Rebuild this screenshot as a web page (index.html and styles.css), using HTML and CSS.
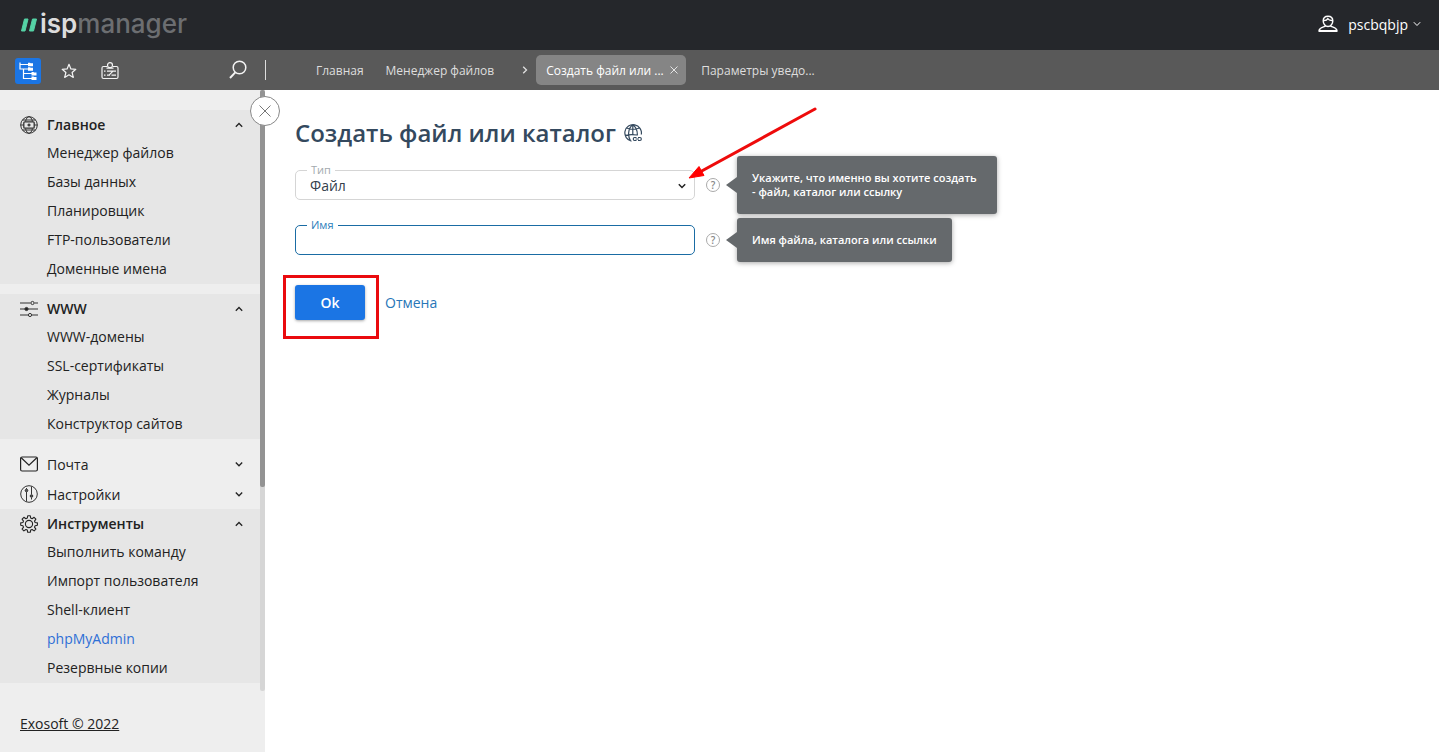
FILE: index.html
```html
<!DOCTYPE html>
<html lang="ru">
<head>
<meta charset="utf-8">
<title>ispmanager</title>
<link rel="stylesheet" href="styles.css">
</head>
<body>
<div class="app">
  <header class="header">
    <a class="logo" href="#">
      <svg class="logo-mark" width="18" height="14" viewBox="0 0 18 14"><path d="M4.500 1H8L5 13H1.500zM12.500 1H16.500L13.500 13H9.500z" fill="#55d2a5" stroke="#55d2a5" stroke-linejoin="round"/></svg>
      <span class="logo-text"><span class="logo-strong">isp</span>manager</span>
    </a>
    <button class="user" type="button">
      <svg width="20" height="18" viewBox="0 0 20 18" fill="none" stroke="#fff" stroke-width="1.400"><path d="M10 1.200c-3 0-4.800 1.800-4.800 4.800 0 2.600 2 5.500 4.800 5.500s4.800-2.900 4.800-5.500c0-3-1.800-4.800-4.800-4.800z"/><path d="M5.500 5.500c2 .3 3.500-.5 4.300-1.800 1 1.500 2.700 2 4.700 1.800M7.500 11c-1 1.200-5.500 1-6.500 4.500M12.500 11c1 1.200 5.500 1 6.500 4.500"/><path d="M.5 16h19" stroke-width="2"/></svg>
      <span>pscbqbjp</span>
      <svg width="8" height="6" viewBox="0 0 8 6" fill="none" stroke="#fff"><path d="M.8 1.200 4 4.500l3.200-3.300"/></svg>
    </button>
  </header>

  <div class="toolbar">
    <div class="tools">
      <button class="tool tool-active" type="button" aria-label="Меню">
        <svg width="18" height="18" viewBox="0 0 18 18" fill="none" stroke="#fff" stroke-width="1.200"><path d="M1 .5V7h8M1 2.500h8M4.500 7v9.500H13M4.500 11.500H13"/><g fill="#fff" stroke="none"><path d="M9 .7h2l.6.600H14V4.300H9zM9 5.200h2l.6.600H14V8.700H9zM12.500 9.900h2l.6.600h2.400v2.900h-5zM12.500 14.400h2l.6.600h2.400V18h-5z"/></g></svg>
      </button>
      <button class="tool" type="button" aria-label="Избранное">
        <svg width="16" height="16" viewBox="0 0 16 16" fill="none" stroke="#f4f4f4" stroke-width="1.200" stroke-linejoin="round"><path d="m8 1.300 1.900 4.600 4.900.4-3.700 3.200 1.200 4.900L8 11.800l-4.300 2.600 1.200-4.900L1.200 6.300l4.900-.4z"/></svg>
      </button>
      <button class="tool" type="button" aria-label="Карточка">
        <svg width="18" height="18" viewBox="0 0 18 18" fill="none" stroke="#f4f4f4" stroke-width="1.200"><path d="M6 4.500H2.500Q1 4.500 1 6v9q0 1.500 1.500 1.500h13q1.500 0 1.500-1.500V6q0-1.500-1.500-1.500H12M5.500 6.200h7"/><circle cx="9" cy="3.200" r="2.500"/><path d="M3 9.200h1.500M6 9.200h9M3 13.200h1.500M6 13.200h3M10.500 13.200H15M12 9.200l-4 4"/></svg>
      </button>
      <button class="tool tool-search" type="button" aria-label="Поиск">
        <svg width="18" height="20" viewBox="0 0 18 20" fill="none" stroke="#f4f4f4" stroke-width="1.500"><circle cx="10.500" cy="7.500" r="6.300"/><path d="M6.300 12.300 1 18" stroke-width="1.900"/></svg>
      </button>
    </div>
    <nav class="tabs">
      <a class="tab" href="#">Главная</a>
      <a class="tab tab-files" href="#">Менеджер файлов</a>
      <svg class="tab-sep" width="6" height="8" viewBox="0 0 6 8" fill="none" stroke="#e0e0e0" stroke-width="1.300"><path d="m1.200.8 3.300 3.200-3.300 3.200"/></svg>
      <div class="tab-active">
        <a class="tab" href="#">Создать файл или ...</a>
        <button class="tab-close" type="button" aria-label="Закрыть"><svg width="8" height="8" viewBox="0 0 8 8" stroke="#e4e4e4"><path d="m.5.500 7 7M7.500.500l-7 7"/></svg></button>
      </div>
      <a class="tab tab-last" href="#">Параметры уведо...</a>
    </nav>
  </div>

  <div class="body">
    <aside class="sidebar">
      <div class="side-scroll">
        <nav class="menu">
          <section class="group group-open">
            <button class="group-head" type="button">
              <svg width="18" height="18" viewBox="0 0 18 18" fill="none" stroke="#333"><circle cx="9" cy="9" r="8.300"/><path d="M5.500 5.500C6.200 2.500 7.500.7 9 .7s2.800 1.800 3.500 4.800M5.500 12.500c.7 3 2 4.800 3.500 4.800s2.800-1.800 3.500-4.800M2.500 4h13M2.500 14h13M.7 9h3M14.300 9h3"/><rect x="3.800" y="5.800" width="10.400" height="6.400" rx="1" stroke-width="1.300"/><path d="M9 7.500v3M7.500 9h3" stroke-width="1.300"/></svg>
              <span>Главное</span>
              <svg class="chev" width="8" height="6" viewBox="0 0 8 6"><path d="M.8 4.800 4 1.500l3.200 3.300"/></svg>
            </button>
            <a href="#">Менеджер файлов</a>
            <a href="#">Базы данных</a>
            <a href="#">Планировщик</a>
            <a href="#">FTP-пользователи</a>
            <a href="#">Доменные имена</a>
          </section>
          <section class="group group-open group-gap">
            <button class="group-head" type="button">
              <svg width="18" height="18" viewBox="0 0 18 18" fill="none" stroke="#333"><path d="M0 3h10.500M14.500 3H18M0 9h18M0 15h8M12 15h6" stroke-width="1.200"/><circle cx="12.500" cy="3" r="1.600"/><circle cx="6.500" cy="9" r="1.600" fill="#222"/><circle cx="10" cy="15" r="1.600"/></svg>
              <span>WWW</span>
              <svg class="chev" width="8" height="6" viewBox="0 0 8 6"><path d="M.8 4.800 4 1.500l3.200 3.300"/></svg>
            </button>
            <a href="#">WWW-домены</a>
            <a href="#">SSL-сертификаты</a>
            <a href="#">Журналы</a>
            <a href="#">Конструктор сайтов</a>
          </section>
          <section class="group group-gap">
            <button class="group-head" type="button">
              <svg width="18" height="18" viewBox="0 0 18 18" fill="none" stroke="#222" stroke-width="1.200"><rect x=".6" y="2" width="16.800" height="14" rx="1.500"/><path d="m1.200 2.800 7.800 7.400 7.800-7.400"/></svg>
              <span>Почта</span>
              <svg class="chev" width="8" height="6" viewBox="0 0 8 6"><path d="M.8 1.500 4 4.800l3.200-3.300"/></svg>
            </button>
          </section>
          <section class="group">
            <button class="group-head" type="button">
              <svg width="18" height="18" viewBox="0 0 18 18" fill="none" stroke="#333"><circle cx="9" cy="9" r="8.300"/><path d="M6.500 3V4M6.500 7v9.500M11.500 1.500v8M11.500 12.500v2"/><circle cx="6.500" cy="5.500" r="1.300" fill="#555"/><circle cx="11.500" cy="11" r="1.300" fill="#555"/></svg>
              <span>Настройки</span>
              <svg class="chev" width="8" height="6" viewBox="0 0 8 6"><path d="M.8 1.500 4 4.800l3.200-3.300"/></svg>
            </button>
          </section>
          <section class="group group-open">
            <button class="group-head" type="button">
              <svg width="18" height="18" viewBox="0 0 18 18" fill="none" stroke="#222" stroke-width="1.100" stroke-linejoin="round"><path d="m7.700.8 2.600 0 .4 2.300 1.400.6 2-1.400 1.800 1.800-1.400 2 .6 1.400 2.300.4v2.400l-2.300.4-.6 1.400 1.400 2-1.800 1.800-2-1.400-1.400.6-.4 2.200H7.700l-.4-2.200-1.400-.6-2 1.400-1.800-1.800 1.400-2-.6-1.400-2.200-.4V7.900l2.200-.4.600-1.400-1.400-2 1.800-1.800 2 1.400 1.400-.6z"/><circle cx="9" cy="9" r="3.600"/></svg>
              <span>Инструменты</span>
              <svg class="chev" width="8" height="6" viewBox="0 0 8 6"><path d="M.8 4.800 4 1.500l3.200 3.300"/></svg>
            </button>
            <a href="#">Выполнить команду</a>
            <a href="#">Импорт пользователя</a>
            <a href="#">Shell-клиент</a>
            <a class="link-blue" href="#">phpMyAdmin</a>
            <a href="#">Резервные копии</a>
          </section>
        </nav>
        <div class="scrollbar"><div class="thumb"></div></div>
      </div>
      <footer class="side-foot"><a href="#">Exosoft © 2022</a></footer>
      <button class="side-close" type="button" aria-label="Свернуть меню"><svg width="12" height="12" viewBox="0 0 12 12" stroke="#777"><path d="m.5.500 11 11M11.500.500l-11 11"/></svg></button>
    </aside>

    <main class="main">
      <div class="title-row">
        <h1>Создать файл или каталог</h1>
        <svg width="18" height="18" viewBox="0 0 18 18" fill="none" stroke="#34495e" stroke-width="1.200"><path d="M17.300 10.500A8.300 8.300 0 1 0 7.500 17.100M8.800.7C4 4 3.500 12 6.500 17M8.800.7c3.500 2.500 4.800 6 4.500 10.800M2.500 4Q9 6.500 15.500 4M1 11.500q5-1.500 12-.5M8.800.7V11"/><path d="M12.500 13.500H10.500q-1.200 0-1.200 1.500t1.200 1.500h2M14 13.500h2q1.300 0 1.300 1.500t-1.300 1.500h-2M11.500 15h3.500"/></svg>
      </div>
      <form class="form">
        <div class="row">
          <div class="field">
            <label for="type">Тип</label>
            <select id="type"><option>Файл</option></select>
            <svg class="select-chev" width="8" height="6" viewBox="0 0 8 6"><path d="M.8 1.200 4 4.500l3.200-3.300"/></svg>
            <svg class="arrow" width="130" height="74" viewBox="0 0 130 74"><path d="M127 3 11 66.500" stroke="#ee0b0b" stroke-width="3" stroke-linecap="round"/><path d="M1 72 11 60.500 16 69.500z" fill="#f00" stroke="#f00"/></svg>
          </div>
          <button class="help" type="button" aria-label="Подсказка">?</button>
          <div class="tip">Укажите, что именно вы хотите создать<br>- файл, каталог или ссылку</div>
        </div>
        <div class="row">
          <div class="field field-focus">
            <label for="name">Имя</label>
            <input id="name" type="text">
          </div>
          <button class="help" type="button" aria-label="Подсказка">?</button>
          <div class="tip">Имя файла, каталога или ссылки</div>
        </div>
        <div class="actions">
          <div class="ok-wrap"><button class="ok" type="button">Ok</button></div>
          <a class="cancel" href="#">Отмена</a>
        </div>
      </form>
    </main>
  </div>
</div>
</body>
</html>
```
FILE: styles.css
```css
* { box-sizing: border-box; }
body {
  margin: 0;
  font-family: "Open Sans", "Noto Sans", sans-serif;
  font-size: 14px;
  color: #222;
  background: #fff;
}
button {
  font: inherit;
  color: inherit;
  background: none;
  border: 0;
  padding: 0;
  cursor: pointer;
}
a { color: inherit; text-decoration: none; }
svg { display: block; flex: none; }

.app { display: flex; flex-direction: column; min-height: 100vh; }

.header {
  display: flex;
  align-items: center;
  justify-content: space-between;
  height: 50px;
  padding: 0 18px 0 20px;
  background: #25272b;
  color: #fff;
}
.logo { display: flex; align-items: center; gap: 2px; }
.logo-text { font: 500 26px/48px Inter, sans-serif; height: 50px; color: #6c6e71; }
.logo-strong { color: #dcdcdd; font-weight: 600; }
.user { display: flex; align-items: center; gap: 10px; padding-bottom: 2px; }
.user svg:last-child { margin-left: -5px; }

.toolbar { display: flex; height: 40px; background: #595959; }
.tools {
  display: flex;
  align-items: center;
  gap: 15px;
  width: 265px;
  padding: 2px 14px 0 15px;
}
.tool {
  display: flex;
  align-items: center;
  justify-content: center;
  width: 26px;
  height: 26px;
  border-radius: 3px;
}
.tool-active { background: #1b75e4; }
.tool-search { margin-left: auto; margin-bottom: 2px; }
.tabs { display: flex; align-items: center; color: #dedede; font-size: 12px; }
.tabs::before { content: ""; width: 1px; height: 20px; margin-right: 50px; background: #ddd; }
.tab { white-space: nowrap; line-height: 20px; padding-top: 2px; }
.tab-files { margin-left: 22px; }
.tab-sep { margin: 0 8px 0 28px; }
.tab-active {
  display: flex;
  align-items: center;
  justify-content: space-between;
  width: 150px;
  height: 30px;
  padding: 0 8px 0 10px;
  border-radius: 5px;
  background: #858585;
  color: #fff;
}
.tab-last { margin-left: 15px; }

.body { display: flex; flex: 1; }
.sidebar {
  position: relative;
  display: flex;
  flex-direction: column;
  width: 265px;
  background: #eee;
}
.side-scroll { display: flex; flex: 1; }
.menu { flex: 1; padding-top: 20px; line-height: 27px; }
.group { display: flex; flex-direction: column; }
.group a { padding-left: 47px; height: 29px; }
.group-open { background: #e6e6e6; }
.group-gap { margin-top: 10px; }
.group-head {
  display: flex;
  align-items: center;
  gap: 9px;
  height: 30px;
  padding: 0 17px 0 20px;
}
.group-open .group-head { height: 29px; font-weight: 600; }
.chev { margin-left: auto; fill: none; stroke: #222; stroke-width: 1.3; }
.group .link-blue { color: #2f6fd6; }
.scrollbar { width: 5px; background: #d6d6d6; border-radius: 2px; }
.thumb { height: 66%; background: #939393; border-radius: 2px; }
.side-foot { height: 61px; padding: 23px 20px 0; line-height: 20px; }
.side-foot a { text-decoration: underline; }
.side-close {
  position: absolute;
  top: 6px;
  right: -15px;
  display: flex;
  align-items: center;
  justify-content: center;
  width: 30px;
  height: 30px;
  border: 1px solid #888;
  border-radius: 50%;
  background: #fff;
}

.main { flex: 1; padding: 26px 30px; }
.title-row { display: flex; align-items: center; gap: 8px; height: 33px; }
h1 { margin: 0; font-size: 24px; line-height: 32px; font-weight: 600; color: #34495e; white-space: nowrap; }
.form { display: flex; flex-direction: column; gap: 25px; margin-top: 21px; }
.row { display: flex; align-items: center; height: 30px; }
.field { position: relative; width: 400px; }
.field label {
  position: absolute;
  top: -8px;
  left: 12px;
  padding: 0 4px;
  background: #fff;
  color: #a3a9ae;
  font-size: 11px;
  line-height: 16px;
}
.field select, .field input {
  display: block;
  width: 100%;
  height: 30px;
  padding: 0 14px;
  border: 1px solid #d5d5d5;
  border-radius: 5px;
  background: #fff;
  color: #34404c;
  font: inherit;
  appearance: none;
  outline: none;
}
.field-focus input { border-color: #1a6ca4; }
.field-focus label { color: #2b7dba; }
.select-chev { position: absolute; right: 9px; top: 13px; fill: none; stroke: #222; stroke-width: 1.5; }
.arrow { position: absolute; left: 393px; top: -64px; z-index: 2; pointer-events: none; }
.help {
  flex: none;
  width: 14px;
  height: 14px;
  margin: 0 17px 0 11px;
  border: 1px solid #aaa;
  border-radius: 50%;
  color: #888;
  font-size: 10px;
  line-height: 12px;
  font-weight: 600;
}
.tip {
  position: relative;
  padding: 15px;
  border-radius: 3px;
  background: #65696c;
  color: #fff;
  font-size: 11px;
  line-height: 14px;
  font-weight: 600;
  white-space: nowrap;
  box-shadow: 0 1px 5px rgba(0, 0, 0, .35);
}
.row:first-child .tip { padding-right: 20px; }
.tip::before {
  content: "";
  position: absolute;
  left: -11px;
  top: 50%;
  margin-top: -8px;
  border: 8px solid transparent;
  border-left: 0;
  border-right: 11px solid #65696c;
}
.actions { display: flex; align-items: center; gap: 20px; margin-top: 5px; }
.ok-wrap { position: relative; }
.ok-wrap::after {
  content: "";
  position: absolute;
  inset: -10px -14px -19px -12px;
  border: 3px solid #ea0a0e;
  pointer-events: none;
}
.ok {
  width: 70px;
  height: 35px;
  border-radius: 3px;
  background: #1b75e4;
  color: #fff;
  font-weight: 600;
  box-shadow: 0 1px 3px rgba(0, 0, 0, .35);
}
.cancel { color: #2876b8; }
```
